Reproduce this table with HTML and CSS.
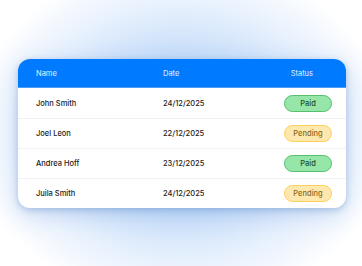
FILE: index.html
```html
<!DOCTYPE html>
<html lang="en">
<head>
    <meta charset="UTF-8">
    <meta name="viewport" content="width=device-width, initial-scale=1.0">
    <title>Payments</title>
    <link rel="stylesheet" href="styles.css">
</head>
<body>
    <div class="card">
        <div class="row head">
            <div class="cell">Name</div>
            <div class="cell">Date</div>
            <div class="cell status">Status</div>
        </div>
        <div class="row">
            <div class="cell">John Smith</div>
            <div class="cell">24/12/2025</div>
            <div class="cell status"><span class="badge paid">Paid</span></div>
        </div>
        <div class="row">
            <div class="cell">Joel Leon</div>
            <div class="cell">22/12/2025</div>
            <div class="cell status"><span class="badge pending">Pending</span></div>
        </div>
        <div class="row">
            <div class="cell">Andrea Hoff</div>
            <div class="cell">23/12/2025</div>
            <div class="cell status"><span class="badge paid">Paid</span></div>
        </div>
        <div class="row">
            <div class="cell">Juila Smith</div>
            <div class="cell">24/12/2025</div>
            <div class="cell status"><span class="badge pending">Pending</span></div>
        </div>
    </div>
</body>
</html>
```
FILE: styles.css
```css
body {
    font-family: Inter, "Noto Sans", sans-serif;
    margin: 0;
    padding: 59px 16px 0 18px;
    min-height: 266px;
    box-sizing: border-box;
    /* soft blue halo behind the card */
    background: radial-gradient(ellipse 210px 175px at 50% 50%, #b8d5f8 0%, #c9dffa 45%, #e6f0fd 72%, #ffffff 100%);
    overflow: hidden;
}
.card {
    width: 328px;
    background: white;
    border-radius: 12px;
    overflow: hidden;
    box-shadow: 0 2px 6px rgba(60, 110, 180, 0.3), 0 6px 24px rgba(70, 130, 210, 0.25);
}
.row {
    display: grid;
    grid-template-columns: 127px 1fr 80px;
    align-items: center;
    height: 30px;
    padding: 0 14px 0 18px;
    font-size: 7.5px;
    font-weight: 500;
    color: #222;
    border-top: 1px solid #f0f2f5;
    box-sizing: border-box;
}
.row.head {
    height: 29px;
    background: #007bff;
    color: #e8f1ff;
    font-weight: 400;
    border-top: none;
    border-bottom: 1px solid #4d9dff;
}
.row:nth-child(2) {
    border-top: none;
}
.status {
    text-align: right;
}
.head .status {
    padding-right: 19px;
}
.badge {
    display: inline-block;
    width: 48px;
    height: 17px;
    line-height: 15px;
    box-sizing: border-box;
    border-radius: 9px;
    text-align: center;
}
.paid {
    background: #95e6a8;
    border: 1px solid #55c06e;
    color: #1d4d28;
}
.pending {
    background: #ffe8ad;
    border: 1px solid #ffd15a;
    color: #8a6a22;
}
```
